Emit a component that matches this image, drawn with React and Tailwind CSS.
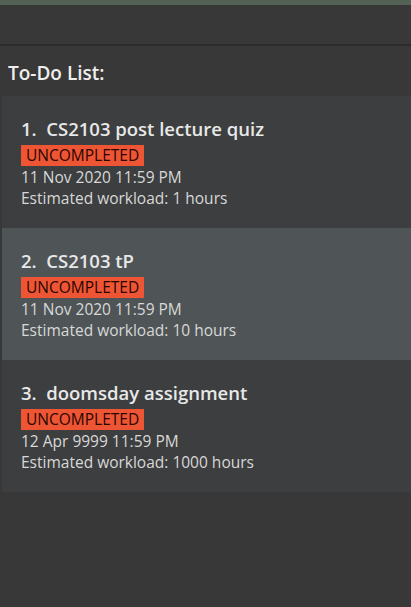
const todos = [
  { id: 1, title: "CS2103 post lecture quiz", date: "11 Nov 2020 11:59 PM", hours: 1 },
  { id: 2, title: "CS2103 tP", date: "11 Nov 2020 11:59 PM", hours: 10 },
  { id: 3, title: "doomsday assignment", date: "12 Apr 9999 11:59 PM", hours: 1000 },
];

function TodoCard({ todo, selected }) {
  return (
    <div
      className={`h-[132px] pl-[19px] pt-[20px] flex flex-col ${
        selected ? "bg-[#4f5557]" : "bg-[#3c3e3f]"
      }`}
    >
      <div className="text-[18.5px] leading-[26px] font-semibold text-[#e8e8e8] whitespace-pre">
        {todo.id}.  {todo.title}
      </div>
      <div className="mt-[3px] self-start bg-[#ee5535] px-[5px] h-[21px] text-[15.5px] leading-[21px] text-[#2a0700]">
        UNCOMPLETED
      </div>
      <div className="text-[15.5px] leading-[22px] text-[#d8d8d8]">{todo.date}</div>
      <div className="text-[15.5px] leading-[21px] text-[#d8d8d8]">
        Estimated workload: {todo.hours} hours
      </div>
    </div>
  );
}

export default function App() {
  return (
    <div
      className="w-[411px] h-[607px] bg-[#383838] flex flex-col overflow-hidden"
      style={{ fontFamily: '"Open Sans", "Noto Sans", sans-serif' }}
    >
      <div className="h-[5px] bg-[#546155]" />
      <div className="h-[39px] bg-[#383838]" />
      <div className="h-[2px] bg-[#2b2b2b]" />
      <div className="h-[50px] pl-[8px] pt-[14px] text-[19px] leading-[26px] font-semibold text-[#eeeeee]">
        To-Do List:
      </div>
      <div className="pl-[2px]">
        {todos.map((t) => (
          <TodoCard key={t.id} todo={t} selected={t.id === 2} />
        ))}
      </div>
    </div>
  );
}
